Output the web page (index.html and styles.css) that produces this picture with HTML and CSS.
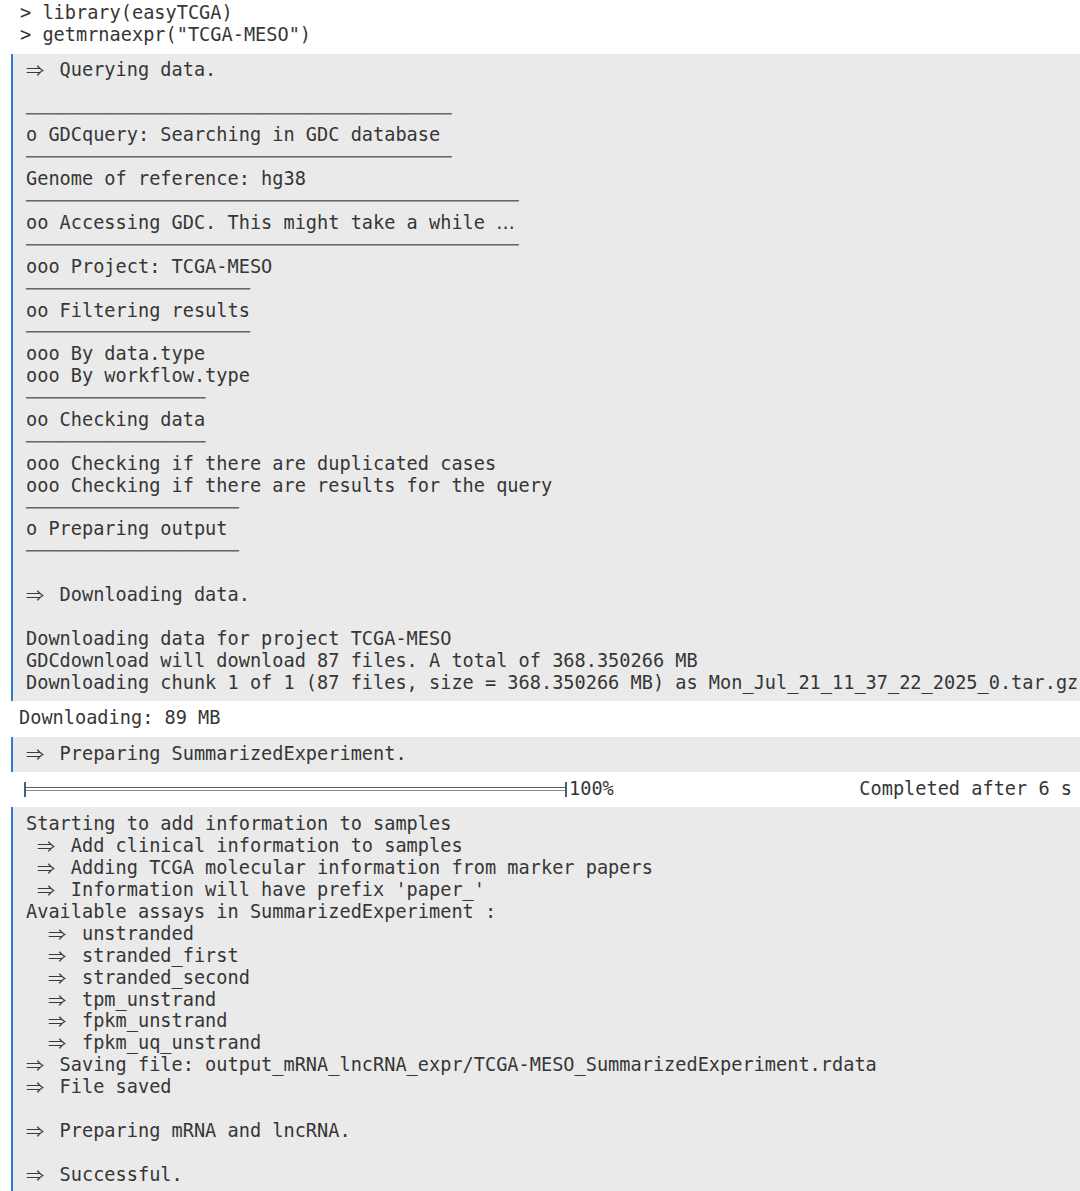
FILE: index.html
```html
<!DOCTYPE html>
<html lang="en">
<head>
<meta charset="utf-8">
<title>getmrnaexpr output</title>
<link rel="stylesheet" href="styles.css">
</head>
<body>
<div class="nb">
  <div class="cell-input code">
    <div class="ln">&gt; library(easyTCGA)</div>
    <div class="ln">&gt; getmrnaexpr("TCGA-MESO")</div>
  </div>

  <div class="out msg first code">
    <div class="ln"><span class="ar">⇒</span><span> Querying data.</span></div>
    <div class="ln"></div>
    <div class="ln rule">──────────────────────────────────────</div>
    <div class="ln">o GDCquery: Searching in GDC database</div>
    <div class="ln rule">──────────────────────────────────────</div>
    <div class="ln">Genome of reference: hg38</div>
    <div class="ln rule">────────────────────────────────────────────</div>
    <div class="ln"><span>oo Accessing GDC. This might take a while </span><span class="ell">…</span></div>
    <div class="ln rule">────────────────────────────────────────────</div>
    <div class="ln">ooo Project: TCGA-MESO</div>
    <div class="ln rule">────────────────────</div>
    <div class="ln">oo Filtering results</div>
    <div class="ln rule">────────────────────</div>
    <div class="ln">ooo By data.type</div>
    <div class="ln">ooo By workflow.type</div>
    <div class="ln rule">────────────────</div>
    <div class="ln">oo Checking data</div>
    <div class="ln rule">────────────────</div>
    <div class="ln">ooo Checking if there are duplicated cases</div>
    <div class="ln">ooo Checking if there are results for the query</div>
    <div class="ln rule">───────────────────</div>
    <div class="ln">o Preparing output</div>
    <div class="ln rule">───────────────────</div>
    <div class="ln"></div>
    <div class="ln"><span class="ar">⇒</span><span> Downloading data.</span></div>
    <div class="ln"></div>
    <div class="ln">Downloading data for project TCGA-MESO</div>
    <div class="ln">GDCdownload will download 87 files. A total of 368.350266 MB</div>
    <div class="ln">Downloading chunk 1 of 1 (87 files, size = 368.350266 MB) as Mon_Jul_21_11_37_22_2025_0.tar.gz</div>
  </div>

  <div class="out plain code">
    <div class="ln">Downloading: 89 MB</div>
  </div>

  <div class="out msg code">
    <div class="ln"><span class="ar">⇒</span><span> Preparing SummarizedExperiment.</span></div>
  </div>

  <div class="out progress">
    <span class="bar"><span class="bar-line"></span></span>
    <span class="code pct">100%</span>
    <span class="code done">Completed after 6 s</span>
  </div>

  <div class="out msg last code">
    <div class="ln">Starting to add information to samples</div>
    <div class="ln in1"><span class="ar">⇒</span><span> Add clinical information to samples</span></div>
    <div class="ln in1"><span class="ar">⇒</span><span> Adding TCGA molecular information from marker papers</span></div>
    <div class="ln in1"><span class="ar">⇒</span><span> Information will have prefix 'paper_'</span></div>
    <div class="ln">Available assays in SummarizedExperiment :</div>
    <div class="ln in2"><span class="ar">⇒</span><span> unstranded</span></div>
    <div class="ln in2"><span class="ar">⇒</span><span> stranded_first</span></div>
    <div class="ln in2"><span class="ar">⇒</span><span> stranded_second</span></div>
    <div class="ln in2"><span class="ar">⇒</span><span> tpm_unstrand</span></div>
    <div class="ln in2"><span class="ar">⇒</span><span> fpkm_unstrand</span></div>
    <div class="ln in2"><span class="ar">⇒</span><span> fpkm_uq_unstrand</span></div>
    <div class="ln"><span class="ar">⇒</span><span> Saving file: output_mRNA_lncRNA_expr/TCGA-MESO_SummarizedExperiment.rdata</span></div>
    <div class="ln"><span class="ar">⇒</span><span> File saved</span></div>
    <div class="ln"></div>
    <div class="ln"><span class="ar">⇒</span><span> Preparing mRNA and lncRNA.</span></div>
    <div class="ln"></div>
    <div class="ln"><span class="ar">⇒</span><span> Successful.</span></div>
  </div>
</div>
</body>
</html>
```

FILE: styles.css
```css
html, body {
  margin: 0;
  padding: 0;
  background: #ffffff;
}

body {
  overflow: hidden;
}

.nb {
  padding-left: 11px;
  display: flex;
  flex-direction: column;
}

.code {
  font-family: "DejaVu Sans Mono", "Liberation Mono", monospace;
  font-size: 18.6px;
  line-height: 21.9px;
  color: #363636;
  margin: 0;
}

.ln,
.pct,
.done {
  white-space: pre;
}

.ln {
  height: 21.9px;
}

.ln.in1 {
  padding-left: 11.2px;
}

.ln.in2 {
  padding-left: 22.4px;
}

.cell-input {
  padding: 2px 0 8px 9px;
}

.out {
  padding: 6px 0 8px 0;
  overflow: hidden;
}

.out.msg {
  background: #eaeaea;
  border-left: 2px solid #2f7dcc;
  padding-left: 13px;
}

.out.first {
  padding-top: 5px;
  padding-bottom: 7px;
}

.out.last {
  padding-bottom: 6px;
}

.out.plain {
  background: #ffffff;
  padding-left: 8px;
}

.ar {
  display: inline-block;
  width: 22.4px;
  height: 21.9px;
  vertical-align: top;
  font-family: "Noto Sans CJK SC", "DejaVu Sans", sans-serif;
  font-size: 15px;
  line-height: 21.7px;
  color: #3a3a3a;
  transform: scaleX(1.22);
  transform-origin: 0 50%;
}

.ell {
  font-family: "DejaVu Sans", sans-serif;
}

.rule {
  color: #666666;
}

.out.progress {
  display: flex;
  align-items: center;
  height: 22px;
  padding: 6px 8px 7px 13px;
  background: #ffffff;
}

.bar {
  display: flex;
  align-items: center;
  width: 539px;
  height: 15px;
  border-left: 2px solid #44607e;
  border-right: 2px solid #44607e;
}

.bar-line {
  flex: 1;
  height: 2px;
  border-top: 1px solid #5c5c5c;
  border-bottom: 1px solid #8a8a8a;
}

.pct {
  margin-left: 2px;
}

.done {
  margin-left: auto;
}
```
